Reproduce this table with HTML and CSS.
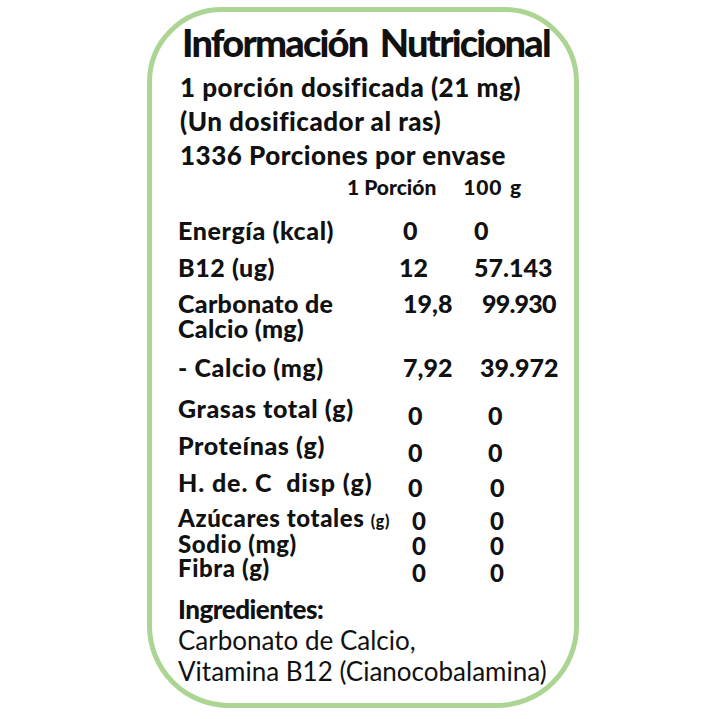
FILE: index.html
```html
<!DOCTYPE html>
<html lang="es">
<head>
<meta charset="utf-8">
<link rel="stylesheet" href="styles.css">
</head>
<body>
<div class="card">
  <h1 class="title">Información Nutricional</h1>
  <div class="serving">
    <p>1 porción dosificada (21 mg)</p>
    <p>(Un dosificador al ras)</p>
    <p>1336 Porciones por envase</p>
  </div>
  <div class="head-row">
    <span class="h1c">1 Porción</span>
    <span class="h2c">100 g</span>
  </div>
  <div class="table">
    <div class="row r-energia"><span class="lbl">Energía (kcal)</span><span class="v1">0</span><span class="v2">0</span></div>
    <div class="row r-b12"><span class="lbl">B12 (ug)</span><span class="v1">12</span><span class="v2">57.143</span></div>
    <div class="row r-carb"><span class="lbl">Carbonato de<br>Calcio (mg)</span><span class="v1">19,8</span><span class="v2">99.930</span></div>
    <div class="row r-calcio"><span class="lbl">- Calcio (mg)</span><span class="v1">7,92</span><span class="v2">39.972</span></div>
    <div class="row r-low r-gras"><span class="lbl">Grasas total (g)</span><span class="v1">0</span><span class="v2">0</span></div>
    <div class="row r-low r-prot"><span class="lbl">Proteínas (g)</span><span class="v1">0</span><span class="v2">0</span></div>
    <div class="row r-low r-hdc"><span class="lbl">H. de. C&nbsp; disp (g)</span><span class="v1">0</span><span class="v2">0</span></div>
    <div class="row r-small r-azu"><span class="lbl">Azúcares totales <small>(g)</small></span><span class="v1">0</span><span class="v2">0</span></div>
    <div class="row r-small r-sod"><span class="lbl">Sodio (mg)</span><span class="v1">0</span><span class="v2">0</span></div>
    <div class="row r-small r-fib"><span class="lbl">Fibra (g)</span><span class="v1">0</span><span class="v2">0</span></div>
  </div>
  <div class="ingredients">
    <p class="ing-title">Ingredientes:</p>
    <p>Carbonato de Calcio,</p>
    <p>Vitamina B12 (Cianocobalamina)</p>
  </div>
</div>
</body>
</html>
```
FILE: styles.css
```css
* { box-sizing: border-box; }
html, body { margin: 0; padding: 0; background: #ffffff; }
body {
  font-family: Lato, "Liberation Sans", sans-serif;
  color: #111111;
  width: 719px;
  height: 719px;
  overflow: hidden;
}
p { margin: 0; }
.card {
  margin: 7px 0 0 147px;
  width: 432px;
  height: 701px;
  border: 5px solid #acd593;
  border-radius: 75px 75px 82px 82px;
  padding: 10px 0 0 26px;
  white-space: nowrap;
}
.title {
  margin: 0 0 0 4px;
  font-size: 38px;
  font-weight: 900;
  line-height: 40px;
  letter-spacing: -1.8px;
  word-spacing: 5px;
}
.serving {
  margin-top: 8px;
  margin-left: 2px;
  font-size: 26px;
  font-weight: 900;
  line-height: 34px;
  letter-spacing: 0.5px;
}
.head-row {
  display: flex;
  font-size: 21px;
  font-weight: 900;
  line-height: 30px;
  padding-left: 169px;
}
.head-row .h2c { margin-left: 27px; letter-spacing: 0.8px; word-spacing: 2px; }
.table { margin-top: 13px; }
.row {
  display: grid;
  grid-template-columns: 222px 74px auto;
  font-size: 25px;
  font-weight: 900;
  line-height: 30px;
}
.lbl { letter-spacing: 0.6px; }
.r-energia { height: 37px; }
.r-energia .v1 { padding-left: 3px; }
.r-b12 { height: 39px; }
.r-b12 .v1 { margin-left: -1px; }
.r-carb { height: 61px; line-height: 25px; }
.r-carb .lbl { letter-spacing: 0.3px; }
.r-carb .v1 { padding-left: 3px; }
.r-carb .v2 { padding-left: 8px; letter-spacing: -0.8px; }
.r-calcio { height: 41px; }
.r-calcio .v1 { padding-left: 3px; }
.r-calcio .v2 { padding-left: 6px; }
.r-low { height: 37px; }
.r-low .v1 { padding-left: 8px; padding-top: 7px; }
.r-low .v2 { padding-left: 14px; padding-top: 7px; }
.r-hdc { height: 39px; }
.r-hdc .lbl { letter-spacing: 0.9px; }
.r-hdc .v1, .r-hdc .v2 { padding-top: 5px; }
.r-hdc .v2 { padding-left: 16px; }
.r-small { height: 24px; font-size: 24px; line-height: 24px; }
.r-azu { height: 26px; }
.r-small small { font-size: 16px; }
.r-small .v1 { padding-left: 12px; padding-top: 3px; }
.r-small .v2 { padding-left: 16px; padding-top: 3px; }
.r-sod .v1, .r-sod .v2 { padding-top: 2px; }
.r-fib .v1, .r-fib .v2 { padding-top: 5px; }
.ingredients {
  margin-top: 14px;
  font-size: 26px;
  line-height: 31px;
}
.ing-title { font-weight: 900; letter-spacing: -0.5px; }
```
